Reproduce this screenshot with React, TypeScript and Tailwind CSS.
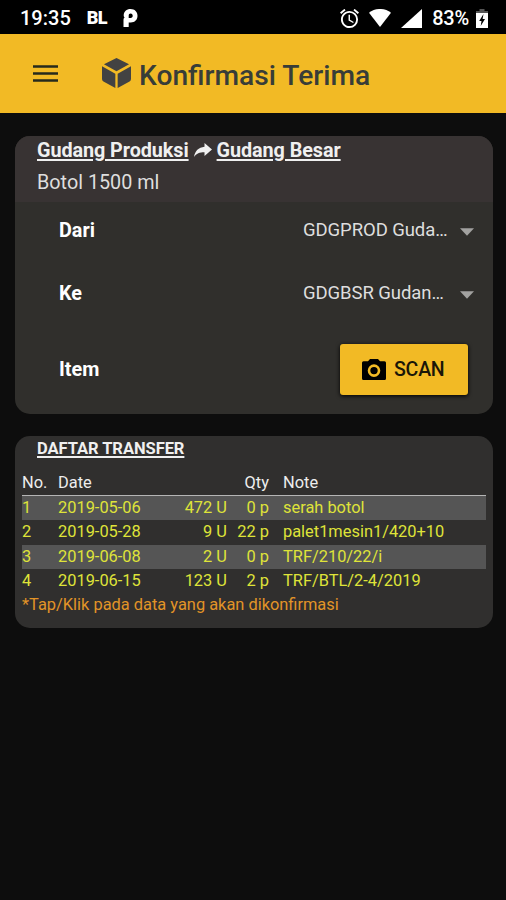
import type { ReactNode } from "react"

const transfers = [
  { no: 1, date: "2019-05-06", unit: "472 U", pallet: "0 p", note: "serah botol" },
  { no: 2, date: "2019-05-28", unit: "9 U", pallet: "22 p", note: "palet1mesin1/420+10" },
  { no: 3, date: "2019-06-08", unit: "2 U", pallet: "0 p", note: "TRF/210/22/i" },
  { no: 4, date: "2019-06-15", unit: "123 U", pallet: "2 p", note: "TRF/BTL/2-4/2019" },
]

const columns = "grid grid-cols-[36px_104px_65px_42px_1fr]"

function StatusBar() {
  return (
    <div className="flex h-[34px] items-center bg-black pl-[20px] pr-[18px] pt-[2px] text-white">
      <span className="text-[20px] font-medium leading-none">19:35</span>
      <span className="ml-[16px] text-[18px] font-black leading-none tracking-[-0.5px]">BL</span>
      <svg className="ml-[16px] h-[18px] w-[15px]" viewBox="0 0 15 18">
        <path
          fill="currentColor"
          fillRule="evenodd"
          d="M7.5 0C11.8 0 14.5 2.8 14.5 6.8s-2.7 6.7-6.7 6.7H5.7V18H.5v-7c0-1.3.5-2 1.2-2.4C.9 8 .7 7 .7 6.3.8 2.5 3.5 0 7.5 0Zm.2 4.500c-1.300 0-2 .8-2 2.200v2.300h2c1.300 0 2-.9 2-2.200s-.7-2.300-2-2.300Z"
        />
      </svg>

      <div className="ml-auto flex items-center">
        <svg className="h-[19px] w-[19px]" viewBox="2 2 20 20" fill="currentColor">
          <path d="M22 5.720l-4.600-3.860-1.290 1.530 4.600 3.860L22 5.720zM7.880 3.390L6.600 1.860 2 5.710l1.290 1.530 4.590-3.850zM12.500 8H11v6l4.750 2.850.75-1.230-4-2.370V8zM12 4c-4.970 0-9 4.030-9 9s4.020 9 9 9a9 9 0 0 0 0-18zm0 16c-3.870 0-7-3.130-7-7s3.130-7 7-7 7 3.130 7 7-3.130 7-7 7z" />
        </svg>
        <svg className="ml-[10px] h-[18px] w-[22px]" viewBox="0 0 22 18">
          <path fill="currentColor" d="M0 3.800C6-1.300 16-1.300 22 3.800L11 18Z" />
        </svg>
        <svg className="ml-[10px] h-[19px] w-[21px]" viewBox="0 0 21 19">
          <path fill="currentColor" d="M21 0v19H0Z" />
        </svg>
        <span className="ml-[10px] text-[20px] font-medium leading-none tracking-[-0.2px]">83%</span>
        <svg className="ml-[7px] h-[19px] w-[12px]" viewBox="0 0 12 19">
          <path fill="#555" d="M3.500 0h5v2H12v3H0V2h3.500Z" />
          <path fill="currentColor" d="M0 4h12v15H0Z" />
          <path fill="#000" d="M7.500 5 3.200 12h2.300l-.8 5L9 10H6.600Z" />
        </svg>
      </div>
    </div>
  )
}

function Field({ label, children }: { label: string; children: ReactNode }) {
  return (
    <div className="flex h-[63px] items-center justify-between pl-[44px] pr-[19px]">
      <span className="text-[19.800px] font-bold text-white">{label}</span>
      {children}
    </div>
  )
}

function SelectValue({ text }: { text: string }) {
  return (
    <div className="flex w-[171px] items-center justify-between text-[18.500px] tracking-[-0.080px] text-[#dedede]">
      <span className="whitespace-nowrap">{text}</span>
      <svg className="mt-[2px] h-[8px] w-[14px] text-[#a2a2a0]" viewBox="0 0 15 8">
        <path fill="currentColor" d="M0 0h15L7.500 8Z" />
      </svg>
    </div>
  )
}

export default function App() {
  return (
    <div className="min-h-[900px] w-full bg-[#0d0d0d] font-['Roboto',sans-serif]">
      <StatusBar />

      <header className="flex h-[79px] items-center bg-[#f2ba25] pl-[33px] text-[#383d38]">
        <svg className="h-[17px] w-[25px] text-[#262a1c]" viewBox="0 0 25 17">
          <path stroke="currentColor" strokeWidth="2.400" d="M0 1.500h25M0 8.500h25M0 15.500h25" />
        </svg>
        <svg className="-mt-[2px] ml-[44px] h-[30px] w-[29px] text-[#424242]" viewBox="0 0 30 30" preserveAspectRatio="none">
          <path
            fill="currentColor"
            d="M15 0 28 6.200 15 13.200 2 6.200ZM0 8.200l13.800 7.500V30L1.500 23.600Q0 22.800 0 21ZM30 8.200l-13.800 7.500V30l12.300-6.400Q30 22.800 30 21Z"
          />
        </svg>
        <h1 className="ml-[8px] pt-[5px] text-[28.200px] font-medium leading-none">Konfirmasi Terima</h1>
      </header>

      <main className="flex flex-col gap-[22px] pl-[15px] pr-[13px] pt-[23px]">
        <section className="h-[278px] overflow-hidden rounded-[15px] bg-[#302f2c]">
          <div className="h-[66px] bg-[#383333] pl-[22px] text-[19.800px]">
            <div className="flex h-[30px] items-center font-bold tracking-[-0.070px] text-[#f0f0f0]">
              <span className="underline decoration-2 underline-offset-2">Gudang Produksi</span>
              <svg className="mx-[5px] -mt-[3px] h-[14px] w-[18px]" viewBox="0 0 18 14">
                <path fill="currentColor" d="M10.500 0 18 6.500 10.500 13V9.200C5.500 9.200 2.500 10.500 0 14 1 8 4.500 4.500 10.500 3.800Z" />
              </svg>
              <span className="underline decoration-2 underline-offset-2">Gudang Besar</span>
            </div>
            <div className="leading-[34px] text-[#dedede]">Botol 1500 ml</div>
          </div>
          <div className="-mt-[3px]">
            <Field label="Dari">
              <SelectValue text="GDGPROD Guda…" />
            </Field>
            <Field label="Ke">
              <SelectValue text="GDGBSR Gudan…" />
            </Field>
          </div>
          <div className="mt-[13px] pr-[6px]">
            <Field label="Item">
              <button className="flex h-[51px] w-[128px] items-center rounded-[3px] bg-[#f2ba25] pl-[22px] text-[19.500px] text-[#1a1608] shadow-[0_1px_4px_#000]">
                <svg className="mr-[8px] h-[21px] w-[24px] text-black" viewBox="0 0 24 21">
                  <path
                    fill="currentColor"
                    fillRule="evenodd"
                    d="M8 0h8l2 2.300h4.500Q24 2.300 24 3.800v15.700q0 1.500-1.500 1.500h-21Q0 21 0 19.500V3.800q0-1.500 1.500-1.500H6ZM12 5.300a6.300 6.300 0 1 0 0 12.600 6.300 6.300 0 0 0 0-12.600Zm0 2.600a3.700 3.700 0 1 1 0 7.400 3.700 3.700 0 0 1 0-7.400Z"
                  />
                </svg>
                <span className="font-medium tracking-[-0.2px]">SCAN</span>
              </button>
            </Field>
          </div>
        </section>

        <section className="h-[192px] rounded-[15px] bg-[#302f2e] pl-[7px] pr-[7px]">
          <h2 className="pl-[15px] text-[16.500px] font-bold leading-[25px] tracking-[-0.050px] text-[#f0f0f0] underline decoration-2 underline-offset-2">
            DAFTAR TRANSFER
          </h2>
          <div className="mt-[8px] text-[16.400px] leading-[24.300px]">
            <div className={`${columns} h-[27px] border-b border-[#b5b5b5] leading-[27px] text-[#ededed]`}>
              <span>No.</span>
              <span>Date</span>
              <span />
              <span className="text-right">Qty</span>
              <span className="pl-[14px]">Note</span>
            </div>
            {transfers.map((row) => (
              <div key={row.no} className={`${columns} h-[24.300px] text-[#dfe339] odd:bg-transparent even:bg-[#555]`}>
                <span>{row.no}</span>
                <span>{row.date}</span>
                <span className="text-right">{row.unit}</span>
                <span className="text-right">{row.pallet}</span>
                <span className="pl-[14px]">{row.note}</span>
              </div>
            ))}
            <p className="text-[#e29427]">*Tap/Klik pada data yang akan dikonfirmasi</p>
          </div>
        </section>
      </main>
    </div>
  )
}
